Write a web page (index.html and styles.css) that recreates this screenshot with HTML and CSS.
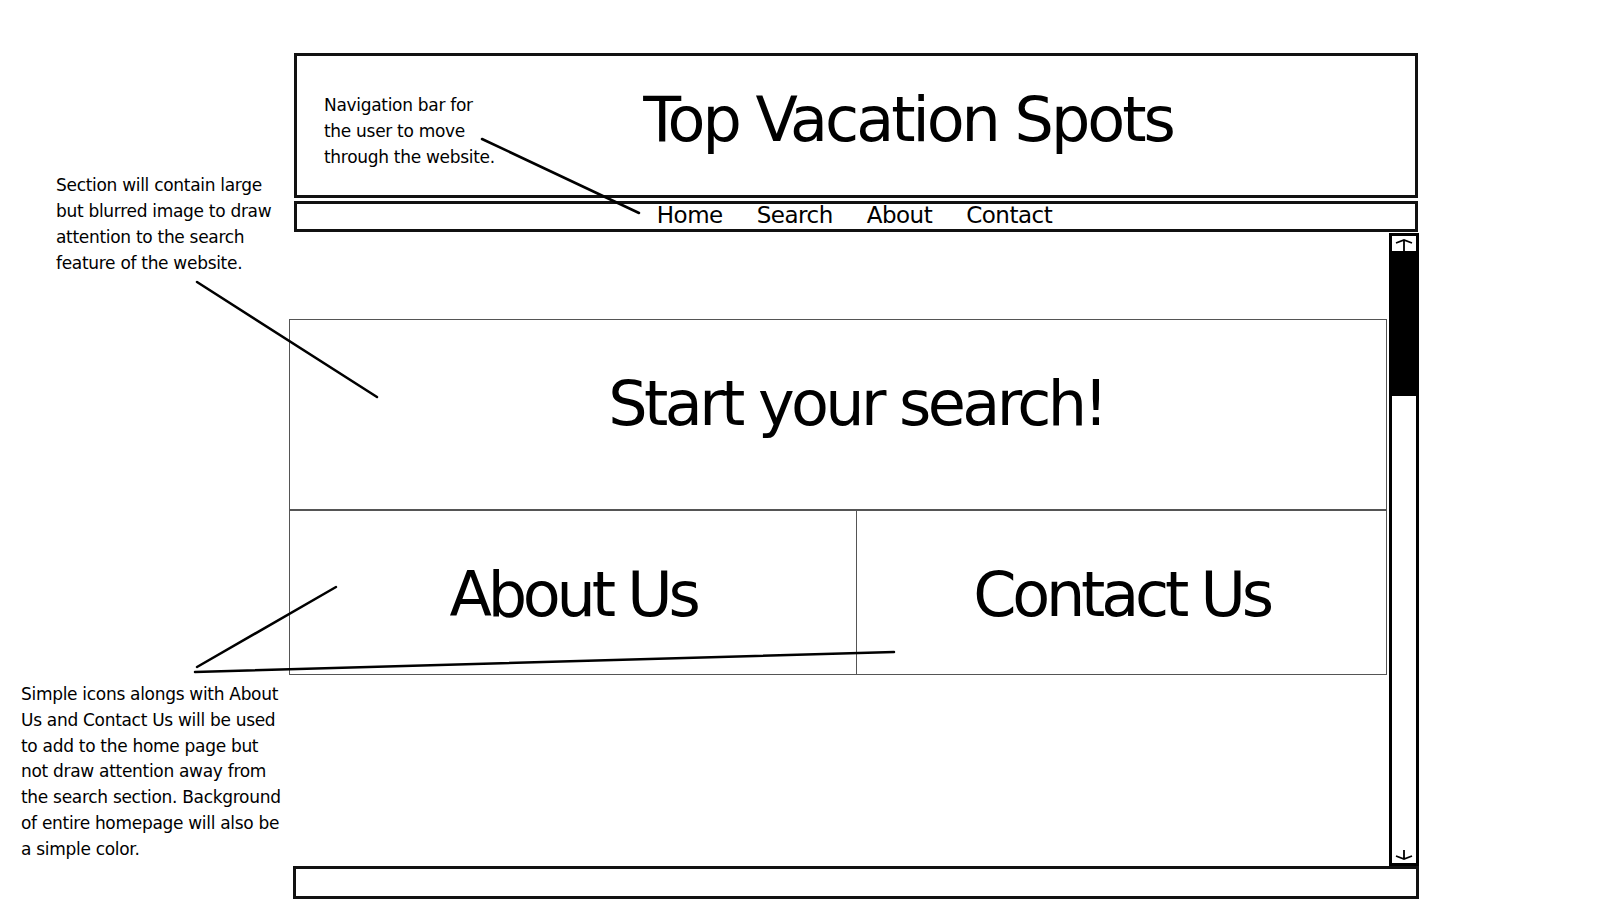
FILE: index.html
```html
<!DOCTYPE html>
<html lang="en">
<head>
    <meta charset="UTF-8">
    <meta name="viewport" content="width=device-width, initial-scale=1.0">
    <title>Top Vacation Spots - Wireframe</title>
    <link rel="stylesheet" href="styles.css">
</head>
<body>
    <div class="page">
        <header class="site-header">
            <h1>Top Vacation Spots</h1>
        </header>
        <nav class="site-nav">
            <ul>
                <li><a href="#">Home</a></li>
                <li><a href="#">Search</a></li>
                <li><a href="#">About</a></li>
                <li><a href="#">Contact</a></li>
            </ul>
        </nav>

        <div class="viewport">
            <main class="content">
                <section class="search">Start your search!</section>
                <div class="tiles">
                    <section class="tile tile-about">About Us</section>
                    <section class="tile">Contact Us</section>
                </div>
            </main>
            <div class="scrollbar">
                <div class="scroll-up">
                    <svg width="24" height="15" viewBox="0 0 24 15"><path d="M4 7 L12 4 L20 7 M12 4 V15" fill="none" stroke="#000" stroke-width="1.8"/></svg>
                </div>
                <div class="scroll-thumb"></div>
                <div class="scroll-track">
                    <svg width="24" height="10" viewBox="0 0 24 10"><path d="M4 6 L12 9 L20 6 M12 0 V9" fill="none" stroke="#000" stroke-width="1.8"/></svg>
                </div>
            </div>
        </div>

        <footer class="site-footer"></footer>
    </div>

    <!-- note del wireframe -->
    <p class="note note-nav">Navigation bar for<br>the user to move<br>through the website.</p>
    <p class="note note-search">Section will contain large<br>but blurred image to draw<br>attention to the search<br>feature of the website.</p>
    <p class="note note-tiles">Simple icons alongs with About<br>Us and Contact Us will be used<br>to add to the home page but<br>not draw attention away from<br>the search section. Background<br>of entire homepage will also be<br>a simple color.</p>

    <svg class="leaders" width="1600" height="900" viewBox="0 0 1600 900">
        <line x1="482" y1="139" x2="639" y2="213"/>
        <line x1="197" y1="282" x2="377" y2="397"/>
        <line x1="197" y1="667" x2="336" y2="587"/>
        <line x1="195" y1="672" x2="894" y2="652"/>
    </svg>
</body>
</html>
```

FILE: styles.css
```css
body {
    margin: 0;
    font-family: "DejaVu Sans", Verdana, sans-serif;
    color: #000;
    background-color: #fff;
    overflow: hidden;
}
.page {
    width: 1130px;
    margin-left: 289px;
    padding-top: 53px;
}
.site-header {
    box-sizing: border-box;
    width: 1124px;
    height: 145px;
    margin-left: 5px;
    border: 3px solid #111;
    padding: 33px 0 0 104px;
    text-align: center;
}
.site-header h1 {
    margin: 0;
    font-size: 62px;
    font-weight: normal;
    line-height: 1;
    letter-spacing: -3px;
}
.site-nav {
    box-sizing: border-box;
    width: 1124px;
    height: 31px;
    margin: 3px 0 0 5px;
    border: 3px solid #111;
}
.site-nav ul {
    list-style: none;
    display: flex;
    justify-content: center;
    gap: 34px;
    margin: 0;
    padding: 0 3px 0 0;
}
.site-nav a {
    display: block;
    color: #000;
    text-decoration: none;
    font-size: 23px;
    line-height: 23px;
    letter-spacing: -0.5px;
}
.viewport {
    display: flex;
    align-items: flex-start;
    gap: 2px;
    height: 634px;
}
.content {
    width: 1098px;
    padding-top: 87px;
}
.search {
    box-sizing: border-box;
    height: 191px;
    border: 1px solid #555;
    padding: 53px 0 0 37px;
    text-align: center;
    font-size: 62px;
    line-height: 1;
    letter-spacing: -3.6px;
}
.tiles {
    box-sizing: border-box;
    display: grid;
    grid-template-columns: 567px 1fr;
    height: 165px;
    border: 1px solid #555;
}
.tile {
    padding-top: 53px;
    text-align: center;
    font-size: 62px;
    line-height: 1;
    letter-spacing: -4.2px;
}
.tile-about {
    border-right: 1px solid #555;
}
.scrollbar {
    box-sizing: border-box;
    width: 30px;
    height: 633px;
    margin-top: 1px;
    border: 3px solid #000;
    display: flex;
    flex-direction: column;
}
.scroll-up {
    height: 15px;
}
.scroll-up svg,
.scroll-track svg {
    display: block;
}
.scroll-thumb {
    height: 145px;
    background-color: #000;
}
.scroll-track {
    flex: 1;
    display: flex;
    align-items: flex-end;
    padding-bottom: 3px;
}
.site-footer {
    box-sizing: border-box;
    width: 1126px;
    height: 33px;
    margin-left: 4px;
    border: 3px solid #111;
}
.note {
    position: absolute;
    margin: 0;
    font-size: 17px;
    line-height: 26px;
    letter-spacing: -0.3px;
    white-space: nowrap;
}
.note-nav {
    left: 324px;
    top: 92px;
}
.note-search {
    left: 56px;
    top: 172px;
}
.note-tiles {
    left: 21px;
    top: 682px;
    line-height: 25.8px;
}
.leaders {
    position: absolute;
    left: 0;
    top: 0;
    pointer-events: none;
}
.leaders line {
    stroke: #000;
    stroke-width: 2.5;
    stroke-linecap: round;
}
```
